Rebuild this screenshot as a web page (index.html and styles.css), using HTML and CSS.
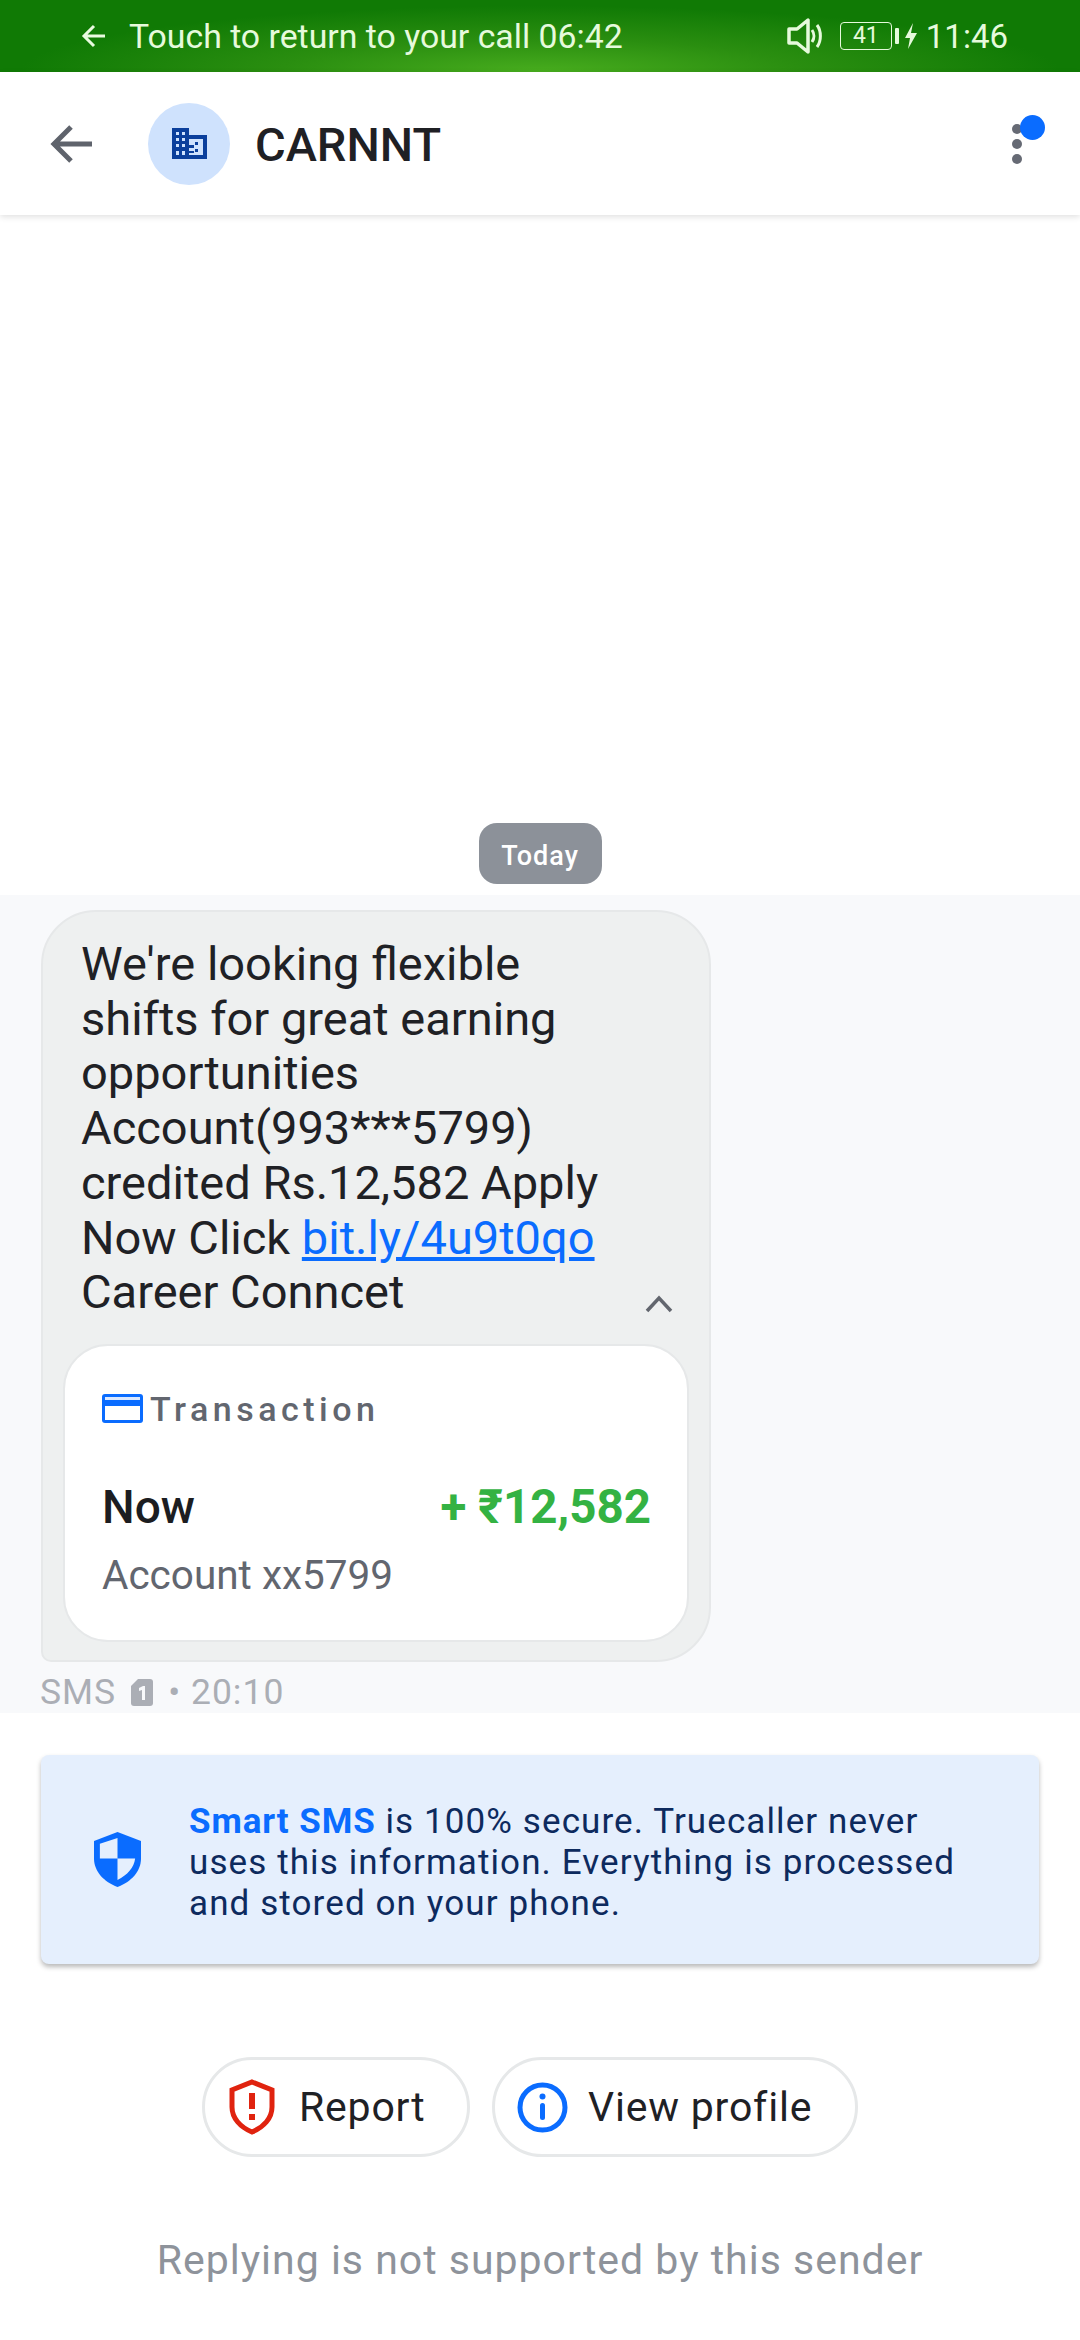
FILE: index.html
```html
<!DOCTYPE html>
<html lang="en">
<head>
  <meta charset="UTF-8">
  <meta name="viewport" content="width=device-width, initial-scale=1.0">
  <title>CARNNT</title>
  <link rel="stylesheet" href="styles.css">
</head>
<body>
  <!-- call banner / status bar -->
  <div class="call-bar">
    <div class="call-left">
      <svg class="call-arrow" viewBox="0 0 26 26"><path d="M24 13H4M13 3L3 13l10 10" fill="none" stroke="#e9fbe0" stroke-width="3"/></svg>
      <span>Touch to return to your call 06:42</span>
    </div>
    <div class="call-right">
      <svg class="volume" viewBox="0 0 36 36"><path d="M2 11h8L21 2v32L10 25H2z" fill="none" stroke="#e6fadc" stroke-width="3.500" stroke-linejoin="round"/><path d="M25 12c2.500 3.500 2.500 8.500 0 12M30 7c4.500 6 4.500 16 0 22" fill="none" stroke="#e6fadc" stroke-width="3"/></svg>
      <span class="battery">41</span>
      <span class="battery-tip"></span>
      <svg class="bolt" viewBox="0 0 12 26"><path d="M8 0L0 15h5l-2 11 9-16H6z" fill="#e6fadc"/></svg>
      <span class="clock">11:46</span>
    </div>
  </div>

  <header class="toolbar">
    <svg class="back" viewBox="0 0 42 40"><path d="M42 20H4M21 3L4 20l17 17" fill="none" stroke="#5f636c" stroke-width="5"/></svg>
    <div class="avatar">
      <svg viewBox="0 0 35 31"><path fill-rule="evenodd" fill="#0b3f9c" d="M0 0h17v7h18v24H0zM4 4v3h3V4zm6 0v3h3V4zM4 10v3h3v-3zm6 0v3h3v-3zM4 16v3h3v-3zm6 0v3h3v-3zM4 23v4h3v-4zm6 0v4h3v-4zM17 11v16h14V11zm6 3h3v3h-3zm0 7h3v3h-3z"/><path fill="#0b3f9c" d="M17 17h5v3h-5zM17 23h5v2h-5z"/></svg>
    </div>
    <h1 class="title">CARNNT</h1>
    <div class="menu">
      <span class="dot"></span>
      <span class="dot"></span>
      <span class="dot"></span>
      <span class="menu-badge"></span>
    </div>
  </header>

  <div class="empty-area">
    <span class="day-pill">Today</span>
  </div>

  <section class="thread">
    <div class="bubble">
      <div class="msg-row">
        <p class="msg-text">We're looking flexible<br>shifts for great earning<br>opportunities<br>Account(993***5799)<br>credited Rs.12,582 Apply<br>Now Click <a href="#">bit.ly/4u9t0qo</a><br>Career Conncet</p>
        <svg class="chevron" viewBox="0 0 28 20"><path d="M2 17L14 4l12 13" fill="none" stroke="#62666e" stroke-width="3.500"/></svg>
      </div>
      <div class="txn-card">
        <div class="txn-head">
          <svg class="card-icon" viewBox="0 0 41 29"><rect width="41" height="29" rx="3" fill="#0a6cff"/><rect x="3" y="3" width="35" height="3" fill="#dce9ff"/><rect x="3" y="12" width="35" height="14" fill="#fff"/></svg>
          <span>Transaction</span>
        </div>
        <div class="txn-row">
          <span class="txn-when">Now</span>
          <span class="txn-amount">+ ₹12,582</span>
        </div>
        <div class="txn-account">Account xx5799</div>
      </div>
    </div>
    <div class="meta">
      <span>SMS</span>
      <svg class="sim" viewBox="0 0 22 27"><path d="M7 0h12a3 3 0 0 1 3 3v21a3 3 0 0 1-3 3H3a3 3 0 0 1-3-3V7z" fill="#abaeb5"/><path d="M8 9l4-2h2v14h-3V11l-3 1z" fill="#f8f9fb"/></svg>
      <span>• 20:10</span>
    </div>
  </section>

  <div class="secure-box">
    <svg class="shield" viewBox="0 0 48 56"><path d="M24 0l24 9v18c0 13-10 24-24 29C10 51 0 40 0 27V9z" fill="#0a6cff"/><path d="M24 6v21H6V12zM24 27h18c-1 9-8 17-18 22z" fill="#e5effd"/></svg>
    <p><b>Smart SMS</b> is 100% secure. Truecaller never<br>uses this information. Everything is processed<br>and stored on your phone.</p>
  </div>

  <div class="actions">
    <button class="action-btn report" type="button">
      <svg viewBox="0 0 46 56"><path d="M23 3l20 8v17c0 11-8 20-20 25C11 48 3 39 3 28V11z" fill="none" stroke="#e0230f" stroke-width="5"/><path d="M20 14h6v16h-6zM20 35h6v6h-6z" fill="#e0230f"/></svg>
      <span>Report</span>
    </button>
    <button class="action-btn profile" type="button">
      <svg viewBox="0 0 51 51"><circle cx="25.500" cy="25.500" r="22.500" fill="none" stroke="#0a6cff" stroke-width="5"/><circle cx="25.500" cy="14.500" r="3" fill="#0a6cff"/><rect x="23" y="21" width="5" height="17" rx="2.500" fill="#0a6cff"/></svg>
      <span>View profile</span>
    </button>
  </div>

  <p class="no-reply">Replying is not supported by this sender</p>
</body>
</html>
```
FILE: styles.css
```css
*{margin: 0; padding: 0; box-sizing: border-box;}

html,body{
  width: 1080px;
  height: 2340px;
  overflow: hidden;
  background-color: white;
  font-family: Roboto, "Noto Sans", sans-serif;
}

/* call banner */
.call-bar{
  height: 72px;
  padding: 0 72px 0 80px;
  display: flex;
  align-items: center;
  justify-content: space-between;
  color: #e6fadc;
  background: radial-gradient(ellipse 520px 66px at 50% 100%, #48ad1e 0%, #2a8e10 50%, #107a05 100%);
}
.call-left{
  display: flex;
  align-items: center;
  gap: 21px;
  font-size: 33.8px;
}
.call-arrow{
  width: 28px;
  height: 26px;
}
.call-right{
  display: flex;
  align-items: center;
  font-size: 33px;
}
.volume{
  width: 36px;
  height: 36px;
  margin-right: 17px;
}
.battery{
  width: 52px;
  height: 28px;
  border: 1px solid #e6fadc;
  border-radius: 4px;
  font-size: 23px;
  line-height: 26px;
  text-align: center;
}
.battery-tip{
  width: 4px;
  height: 16px;
  margin: 0 6px 0 3px;
  background-color: #e6fadc;
  border-radius: 1px;
}
.bolt{
  width: 12px;
  height: 26px;
  margin-right: 9px;
}

/* toolbar */
.toolbar{
  position: relative;
  height: 143px;
  padding-left: 50px;
  display: flex;
  align-items: center;
  background-color: white;
  box-shadow: 0 2px 6px rgba(0, 0, 0, 0.12);
}
.back{
  width: 42px;
  height: 40px;
}
.avatar{
  width: 82px;
  height: 82px;
  margin-left: 56px;
  border-radius: 50%;
  background-color: #cfe2fd;
  display: flex;
  align-items: center;
  justify-content: center;
}
.avatar svg{
  width: 35px;
  height: 31px;
}
.title{
  margin-left: 25px;
  padding-top: 2px;
  font-size: 47px;
  font-weight: 500;
  color: #1f2024;
}
.menu{
  position: relative;
  margin-left: auto;
  margin-right: 58px;
  display: flex;
  flex-direction: column;
  gap: 5px;
}
.dot{
  width: 10px;
  height: 10px;
  border-radius: 50%;
  background-color: #666a74;
}
.menu-badge{
  position: absolute;
  top: -9px;
  left: 8px;
  width: 25px;
  height: 25px;
  border-radius: 50%;
  background-color: #0a6cff;
}

/* white part above the thread */
.empty-area{
  height: 680px;
  padding-top: 608px;
  display: flex;
  justify-content: center;
}
.day-pill{
  width: 123px;
  height: 61px;
  border-radius: 18px;
  background-color: #8c9199;
  color: white;
  font-size: 27px;
  font-weight: 500;
  letter-spacing: 1px;
  line-height: 66px;
  text-align: center;
}

/* thread */
.thread{
  height: 818px;
  padding: 15px 0 0 41px;
  background-color: #f8f9fb;
}
.bubble{
  width: 670px;
  height: 752px;
  padding: 25px 20px 20px;
  border: 2px solid #e6e8e9;
  border-radius: 55px 55px 55px 10px;
  background-color: #eef0f0;
}
.msg-row{
  display: flex;
  align-items: flex-end;
  justify-content: space-between;
  padding: 0 16px 0 18px;
}
.msg-text{
  font-size: 47px;
  line-height: 54.7px;
  color: #1f2125;
}
.msg-text a{
  color: #0a6cff;
}
.chevron{
  width: 28px;
  height: 20px;
  margin-bottom: 6px;
}
.txn-card{
  height: 298px;
  margin-top: 24px;
  padding: 43px 36px 0 37px;
  border: 2px solid #e6e8e9;
  border-radius: 45px;
  background-color: white;
}
.txn-head{
  display: flex;
  align-items: center;
  gap: 7px;
  font-size: 34px;
  font-weight: 500;
  letter-spacing: 4.5px;
  color: #62666f;
}
.card-icon{
  width: 41px;
  height: 29px;
}
.txn-row{
  margin-top: 50px;
  display: flex;
  align-items: baseline;
  justify-content: space-between;
}
.txn-when{
  font-size: 46px;
  font-weight: 500;
  color: #1c1d21;
}
.txn-amount{
  font-size: 47.5px;
  font-weight: 700;
  color: #34b243;
}
.txn-account{
  margin-top: 16px;
  font-size: 40.5px;
  color: #62666f;
}
.meta{
  margin-top: 9px;
  margin-left: -1px;
  display: flex;
  align-items: center;
  gap: 15px;
  font-size: 35.5px;
  letter-spacing: 1px;
  color: #abaeb5;
}
.sim{
  width: 22px;
  height: 27px;
}

/* smart sms info */
.secure-box{
  width: 998px;
  height: 209px;
  margin: 42px 0 0 41px;
  padding-left: 53px;
  display: flex;
  align-items: center;
  gap: 48px;
  border-radius: 8px;
  background-color: #e5effd;
  box-shadow: 0 3px 5px rgba(0, 0, 0, 0.28);
}
.shield{
  width: 47px;
  height: 55px;
}
.secure-box p{
  padding-top: 6px;
  font-size: 35px;
  line-height: 41px;
  letter-spacing: 1.1px;
  color: #0d2a5e;
}
.secure-box b{
  font-weight: 700;
  letter-spacing: 0.9px;
  color: #0a6cff;
}

/* buttons */
.actions{
  margin-top: 93px;
  padding-right: 20px;
  display: flex;
  justify-content: center;
  gap: 22px;
}
.action-btn{
  height: 100px;
  display: flex;
  align-items: center;
  border: 3px solid #e6e8e9;
  border-radius: 50px;
  background-color: white;
  font-family: inherit;
  font-size: 41px;
  letter-spacing: 0.8px;
  color: #1f2125;
}
.report{
  width: 268px;
  padding-left: 24px;
  gap: 24px;
}
.report svg{
  width: 46px;
  height: 56px;
}
.profile{
  width: 366px;
  padding-left: 22px;
  gap: 20px;
}
.profile svg{
  width: 51px;
  height: 51px;
}

.no-reply{
  margin-top: 79px;
  text-align: center;
  font-size: 41px;
  letter-spacing: 1px;
  color: #8e939b;
}
```
